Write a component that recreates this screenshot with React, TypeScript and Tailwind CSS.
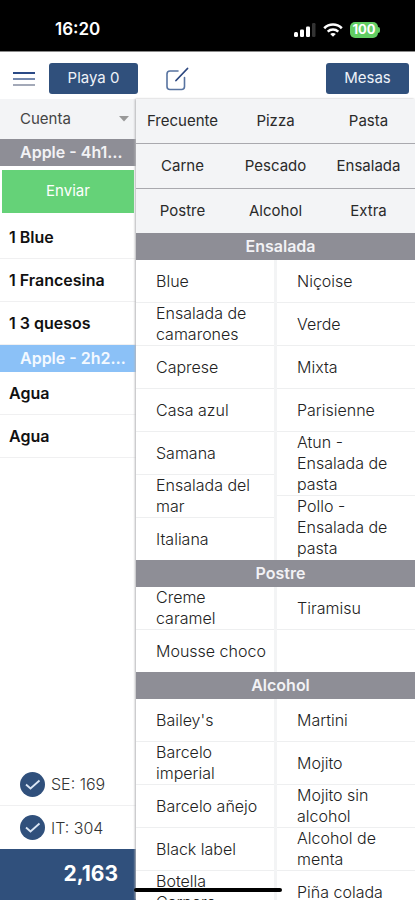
type Section = { title: string; columns: string[][] };

const categories = [
  'Frecuente', 'Pizza', 'Pasta',
  'Carne', 'Pescado', 'Ensalada',
  'Postre', 'Alcohol', 'Extra',
];

const sections: Section[] = [
  {
    title: 'Ensalada',
    columns: [
      ['Blue', 'Ensalada de camarones', 'Caprese', 'Casa azul', 'Samana', 'Ensalada del mar', 'Italiana'],
      ['Niçoise', 'Verde', 'Mixta', 'Parisienne', 'Atun - Ensalada de pasta', 'Pollo - Ensalada de pasta'],
    ],
  },
  {
    title: 'Postre',
    columns: [['Creme caramel', 'Mousse choco'], ['Tiramisu', '']],
  },
  {
    title: 'Alcohol',
    columns: [
      ["Bailey's", 'Barcelo imperial', 'Barcelo añejo', 'Black label', 'Botella Carnero'],
      ['Martini', 'Mojito', 'Mojito sin alcohol', 'Alcohol de menta', 'Piña colada'],
    ],
  },
];

const totals = [
  { label: 'SE', value: 169 },
  { label: 'IT', value: 304 },
];

// ── Status bar ──────────────────────────────────────────────────────────────
function StatusBar() {
  return (
    <div className="flex h-13 shrink-0 items-center justify-between border-b border-[#8a8a8a] bg-black pt-2 pr-[35px] pl-[55px] text-white">
      <span className="text-[17px] font-semibold">16:20</span>
      <div className="flex items-center gap-[7px]">
        <svg viewBox="0 0 22 14" className="h-3.5 w-[22px]" fill="#fff" aria-hidden="true">
          <rect x="0" y="9" width="4" height="5" rx="1.5" />
          <rect x="6" y="6.5" width="4" height="7.5" rx="1.2" />
          <rect x="12" y="3.5" width="4" height="10.5" rx="1.2" />
          <rect x="18" y="0" width="3.5" height="14" rx="1.2" fill="#333" />
        </svg>
        <svg viewBox="0 0 20 14" className="h-3.5 w-5" fill="none" stroke="#fff" aria-hidden="true">
          <path d="M1.2 5.2C6.2.3 13.8.3 18.8 5.2" strokeWidth="2.6" />
          <path d="M4.7 8.6c3-2.8 7.6-2.8 10.6 0" strokeWidth="2.4" />
          <path d="M10 13.8 7.2 11c1.6-1.4 4-1.4 5.6 0z" fill="#fff" stroke="none" />
        </svg>
        <div className="flex items-center">
          <span className="flex h-4 w-7 items-center justify-center rounded-[5px] bg-[#62cd63] text-[13px] font-bold">100</span>
          <span className="h-1.5 w-0.5 rounded-r bg-[#62cd63]" />
        </div>
      </div>
    </div>
  );
}

// ── Toolbar ─────────────────────────────────────────────────────────────────
function Toolbar() {
  return (
    <header className="flex h-[47px] shrink-0 items-center bg-white pt-1.5 pr-1.5 pl-3">
      <button type="button" aria-label="Menú">
        <svg viewBox="0 0 24 16" className="h-4 w-6" strokeWidth="2" aria-hidden="true">
          <path d="M1 2h22" stroke="#2b4a86" />
          <path d="M1 8h22" stroke="#7488ad" />
          <path d="M1 14h22" stroke="#a3a9b8" />
        </svg>
      </button>
      <button type="button" className="ml-[13px] h-[31px] w-[89px] rounded-[3px] bg-[#30507c] text-[15px] text-[#eef2f8]">
        Playa 0
      </button>
      <button type="button" aria-label="Editar" className="ml-6">
        <svg viewBox="0 0 28 28" className="size-7" fill="none" strokeLinecap="round" aria-hidden="true">
          <path
            d="M16 6H8Q5 6 5 9V21.500Q5 24.500 8 24.500H19.500Q22.500 24.500 22.500 21.500V12.500"
            stroke="#5773a0"
            strokeWidth="1.6"
          />
          <path d="M14 15.500 25.500 3.500" stroke="#2b467f" strokeWidth="1.8" />
        </svg>
      </button>
      <button type="button" className="ml-auto h-[31px] w-[83px] rounded-[3px] bg-[#30507c] text-[15px] text-[#eef2f8]">
        Mesas
      </button>
    </header>
  );
}

// ── Current order ───────────────────────────────────────────────────────────
function OrderLine({ text }: { text: string }) {
  return (
    <li className="flex h-[43px] items-center border-b border-[#f0f0f1] px-[9px] text-base font-semibold text-[#111]">
      {text}
    </li>
  );
}

function CheckBadge() {
  return (
    <svg viewBox="0 0 25 25" className="size-[25px]" fill="none" aria-hidden="true">
      <circle cx="12.5" cy="12.5" r="12.5" fill="#30507c" />
      <path d="m6 12.500 4.500 4L19.500 8.500" stroke="#dbe6f5" strokeWidth="1.8" />
    </svg>
  );
}

function OrderPanel() {
  return (
    <aside className="flex w-34 shrink-0 flex-col">
      <button type="button" className="flex h-10 shrink-0 items-center justify-between bg-[#f3f4f6] pr-[7px] pl-5 text-[15px] text-[#444]">
        Cuenta
        <svg viewBox="0 0 10 6" className="h-1.5 w-2.5" fill="#999" aria-hidden="true">
          <path d="M0 0h10L5 5.500z" />
        </svg>
      </button>

      <h2 className="h-[27px] shrink-0 truncate bg-[#8e8e96] pr-2 pl-5 text-base leading-[27px] font-semibold text-[#f2f2f5]">
        Apple - 4h12m
      </h2>
      <div className="px-0.5 pt-1 pb-[3px]">
        <button type="button" className="h-[43px] w-full bg-[#65d278] text-[15px] text-white">
          Enviar
        </button>
      </div>
      <ul>
        <OrderLine text="1 Blue" />
        <OrderLine text="1 Francesina" />
        <OrderLine text="1 3 quesos" />
      </ul>

      <h2 className="h-[27px] shrink-0 truncate bg-[#8bc1f7] pr-2 pl-5 text-base leading-[27px] font-semibold text-[#f4f9ff]">
        Apple - 2h20m
      </h2>
      <ul>
        <OrderLine text="Agua" />
        <OrderLine text="Agua" />
      </ul>

      <div className="mt-auto">
        {totals.map(({ label, value }) => (
          <div
            key={label}
            className="flex h-[43px] items-center gap-1.5 border-b border-[#f0f0f1] pl-5 text-base font-light text-[#333] last:border-b-0"
          >
            <CheckBadge />
            {label}: {value}
          </div>
        ))}
      </div>
      <div className="h-[51px] shrink-0 bg-[#30507c] pr-[18px] text-right text-[21px] leading-[50px] font-bold text-white">
        2,163
      </div>
    </aside>
  );
}

// ── Menu ────────────────────────────────────────────────────────────────────
function MenuSection({ section }: { section: Section }) {
  return (
    <section>
      <h2 className="h-[27px] bg-[#8e8e96] pl-2.5 text-center text-base leading-[27px] font-semibold text-[#f2f2f5]">
        {section.title}
      </h2>
      <div className="grid grid-cols-2 gap-x-[3px] bg-[#f3f4f5]">
        {section.columns.map((items, col) => (
          <ul key={col} className="bg-white">
            {items.map((item, i) => (
              <li key={i} className="border-b border-[#eeeff0] last:border-b-0">
                {item ? (
                  <button
                    type="button"
                    className="flex min-h-[42px] w-full items-center pr-1.5 pl-5 text-left text-base leading-[21px] font-light text-[#222]"
                  >
                    {item}
                  </button>
                ) : (
                  <div className="h-[42px]" />
                )}
              </li>
            ))}
          </ul>
        ))}
      </div>
    </section>
  );
}

function MenuPanel() {
  return (
    <main className="min-w-0 flex-1 overflow-hidden shadow-[-1px_0_2px_#b5b5b8]">
      <nav className="grid grid-cols-3 bg-[#f3f4f6]">
        {categories.map((name) => (
          <button
            key={name}
            type="button"
            className="h-[45px] border-b border-[#a9a9ae] text-[15px] text-[#2a2a2a] nth-[n+7]:h-11 nth-[n+7]:border-b-0"
          >
            {name}
          </button>
        ))}
      </nav>
      {sections.map((section) => (
        <MenuSection key={section.title} section={section} />
      ))}
    </main>
  );
}

export default function App() {
  return (
    <div className="relative flex h-screen flex-col overflow-hidden bg-white font-['Inter',sans-serif]">
      <StatusBar />
      <Toolbar />
      <div className="flex min-h-0 flex-1">
        <OrderPanel />
        <MenuPanel />
      </div>
      {/* Home indicator */}
      <div className="absolute bottom-2 left-1/2 h-1 w-[148px] -translate-x-1/2 rounded-full bg-black" />
    </div>
  );
}
